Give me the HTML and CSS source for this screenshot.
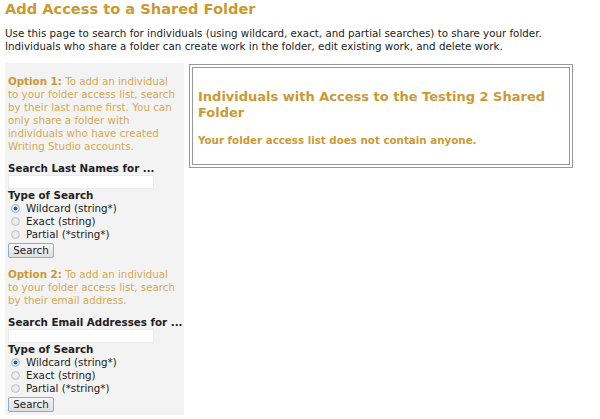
FILE: index.html
```html
<!DOCTYPE html>
<html>
<head>
<meta charset="utf-8">
<link rel="stylesheet" href="styles.css">
</head>
<body>
<h1 class="title">Add Access to a Shared Folder</h1>
<p class="intro">Use this page to search for individuals (using wildcard, exact, and partial searches) to share your folder.<br>Individuals who share a folder can create work in the folder, edit existing work, and delete work.</p>
<div class="layout">
  <div class="sidebar">
    <p class="option"><b>Option 1:</b> To add an individual to your folder access list, search by their last name first. You can only share a folder with individuals who have created Writing Studio accounts.</p>
    <div class="label">Search Last Names for ...</div>
    <input class="field" type="text">
    <div class="label">Type of Search</div>
    <label class="radio"><input type="radio" name="t1" checked> Wildcard (string*)</label>
    <label class="radio"><input type="radio" name="t1"> Exact (string)</label>
    <label class="radio"><input type="radio" name="t1"> Partial (*string*)</label>
    <button class="btn">Search</button>
    <p class="option opt2"><b>Option 2:</b> To add an individual to your folder access list, search by their email address.</p>
    <div class="label">Search Email Addresses for ...</div>
    <input class="field" type="text">
    <div class="label">Type of Search</div>
    <label class="radio"><input type="radio" name="t2" checked> Wildcard (string*)</label>
    <label class="radio"><input type="radio" name="t2"> Exact (string)</label>
    <label class="radio"><input type="radio" name="t2"> Partial (*string*)</label>
    <button class="btn">Search</button>
  </div>
  <div class="box">
    <h2 class="box-title">Individuals with Access to the Testing 2 Shared Folder</h2>
    <p class="empty">Your folder access list does not contain anyone.</p>
  </div>
</div>
</body>
</html>
```
FILE: styles.css
```css
body {
  margin: 0 5px;
  font-family: "DejaVu Sans", Verdana, sans-serif;
  font-size: 10.3px;
  color: #222;
  background: #fff;
}
.title {
  margin: 0;
  font-size: 14.6px;
  line-height: 17px;
  color: #cc9933;
}
.intro {
  margin: 10px 0 0;
  line-height: 13px;
}
.layout {
  display: flex;
  align-items: flex-start;
  gap: 5px;
  margin: 10px 0 0 -2px;
}
.sidebar {
  width: 171px;
  background: #f3f3f3;
  padding: 12px 5px 3px;
  flex: none;
}
.option {
  margin: 0;
  line-height: 13px;
  color: #d6a955;
}
.option b { color: #cc9933; }
.opt2 { margin-top: 10px; }
.label {
  font-weight: bold;
  margin-top: 9px;
  line-height: 13px;
  white-space: nowrap;
}
.field {
  display: block;
  width: 146px;
  height: 14px;
  box-sizing: border-box;
  border: 1px solid #eaeaea;
  background: #fff;
  margin: 0;
  padding: 0;
}
.field + .label { margin-top: 0; }
.radio {
  display: flex;
  align-items: center;
  line-height: 13px;
}
.radio input {
  appearance: none;
  -webkit-appearance: none;
  width: 9px;
  height: 9px;
  margin: 0 6px 0 3px;
  border: 1px solid #c4c4c4;
  border-radius: 50%;
  background: radial-gradient(circle, #f4f4f4 0, #dcdcdc 100%);
  box-sizing: border-box;
}
.radio input:checked {
  border-color: #9bb6d6;
  background: radial-gradient(circle, #2f5f9f 0, #2f5f9f 35%, #dce8f5 45%, #e8eef6 100%);
}
.btn {
  display: block;
  font-family: "DejaVu Sans", Verdana, sans-serif;
  font-size: 10.3px;
  height: 15px;
  width: 46px;
  padding: 0;
  margin-top: 2px;
  border: 1px solid #7fb0dc;
  background: linear-gradient(#f6f6f6, #dedede);
  border-radius: 2px;
  color: #222;
  line-height: 13px;
}
.box {
  width: 366px;
  border: 4px double #999;
  padding: 21px 5px 18px;
  margin-top: 1px;
}
.box-title {
  margin: 0;
  font-size: 13px;
  line-height: 16px;
  color: #cc9933;
}
.empty {
  margin: 13px 0 0;
  font-weight: bold;
  color: #cc9933;
}
```
